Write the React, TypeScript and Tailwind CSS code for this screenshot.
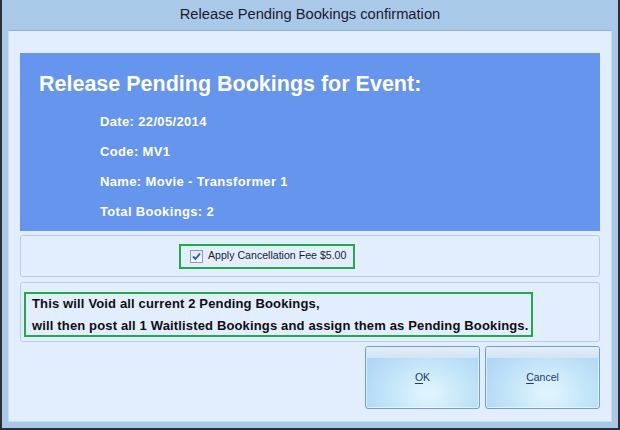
import React from "react";

const bold = "font-['Liberation_Sans',Arial,sans-serif] font-bold";
const reg = "font-['Liberation_Sans',Arial,sans-serif]";

function DialogButton({ label, mnemonic }: { label: string; mnemonic: string }) {
  const rest = label.slice(1);
  return (
    <button className="relative w-[115px] h-[63px] rounded-[3px] border border-[#6a9fdc] bg-[radial-gradient(ellipse_at_55%_75%,#e3f6fe_0%,#c3e5f9_45%,#a6cff2_100%)] shadow-[inset_0_0_0_1px_rgba(255,255,255,0.55)] flex flex-col overflow-hidden p-0">
      <div className="h-[11px] w-full shrink-0 bg-[linear-gradient(#e4eef9,#d2e4f5)]" />
      <div className={`flex-1 flex items-center justify-center pb-[11px] text-[10.5px] text-[#1f3864] ${reg}`}>
        <span>
          <span className="underline underline-offset-2">{mnemonic}</span>
          {rest}
        </span>
      </div>
    </button>
  );
}

export default function App() {
  return (
    <div className="w-[620px] h-[430px] bg-[#a9c9e8] border-x-2 border-b-2 border-[#2e2f33] flex flex-col">
      <div className={`h-[30px] shrink-0 flex items-center justify-center text-[14.7px] text-[#1b1b2b] ${reg} pb-[1px]`}>
        Release Pending Bookings confirmation
      </div>
      <div className="mx-[6px] h-[392px] bg-[#e2eefd] border border-[#c9dcf3] border-t-[#8fb0d6] flex flex-col px-[11px] pt-[22px]">
        <div className="h-[178px] bg-[#6595ec] text-white flex flex-col">
          <div className={`pl-[19px] pt-[18px] text-[21.5px] leading-[26px] ${bold}`}>
            Release Pending Bookings for Event:
          </div>
          <div className={`pl-[80px] pt-[10px] flex flex-col text-[13px] leading-[30px] ${bold} tracking-[0.35px]`}>
            <div>Date: 22/05/2014</div>
            <div>Code: MV1</div>
            <div>Name: Movie - Transformer 1</div>
            <div>Total Bookings: 2</div>
          </div>
        </div>
        <div className="mt-[4px] h-[42px] rounded-[3px] border border-[#b5cdea] flex items-center">
          <div className="ml-[158px] w-[176px] h-[25px] border-2 border-[#21a94a] flex items-center pl-[9px] gap-[5px]">
            <div className="w-[13px] h-[13px] border border-[#8a9fbd] bg-[linear-gradient(#dfe7f2,#f7f9fc)] flex items-center justify-center">
              <svg width="9" height="9" viewBox="0 0 9 9">
                <path d="M1 4.5 L3.5 7 L8 1.5" fill="none" stroke="#2a56a8" strokeWidth="1.8" />
              </svg>
            </div>
            <span className={`text-[10.6px] text-[#1b1b2b] ${reg}`}>Apply Cancellation Fee $5.00</span>
          </div>
        </div>
        <div className="mt-[5px] h-[60px] rounded-[3px] border border-[#b5cdea] pl-[3px] pt-[9px]">
          <div className={`w-[509px] h-[45px] border-2 border-[#21a94a] pl-[6px] flex flex-col justify-center text-[13px] leading-[22px] tracking-[0.15px] text-[#0e0e14] ${bold}`}>
            <div>This will Void all current 2 Pending Bookings,</div>
            <div>will then post all 1 Waitlisted Bookings and assign them as Pending Bookings.</div>
          </div>
        </div>
        <div className="mt-[4px] flex justify-end gap-[5px]">
          <DialogButton label="OK" mnemonic="O" />
          <DialogButton label="Cancel" mnemonic="C" />
        </div>
      </div>
    </div>
  );
}
